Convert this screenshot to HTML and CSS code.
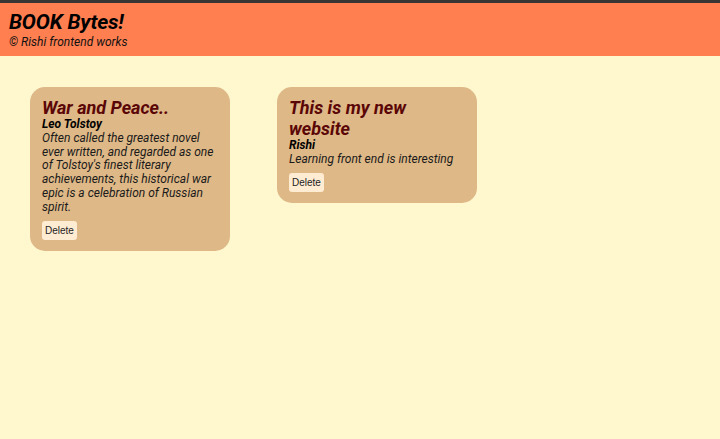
FILE: index.html
```html
<!DOCTYPE html>
<html>
<head>
<meta charset="utf-8">
<link rel="stylesheet" href="styles.css">
</head>
<body>
<header class="header">
  <h1 class="brand">BOOK Bytes!</h1>
  <p class="credit">© Rishi frontend works</p>
</header>
<main class="cards">
  <div class="card">
    <h2 class="card-title">War and Peace..</h2>
    <h3 class="card-author">Leo Tolstoy</h3>
    <p class="card-text">Often called the greatest novel ever written, and regarded as one of Tolstoy's finest literary achievements, this historical war epic is a celebration of Russian spirit.</p>
    <button class="delete-btn">Delete</button>
  </div>
  <div class="card">
    <h2 class="card-title">This is my new website</h2>
    <h3 class="card-author">Rishi</h3>
    <p class="card-text">Learning front end is interesting</p>
    <button class="delete-btn">Delete</button>
  </div>
</main>
</body>
</html>
```
FILE: styles.css
```css
html, body {
  margin: 0;
  padding: 0;
}
body {
  background: #fff8cf;
  border-top: 3px solid #383634;
  font-family: Roboto, "Noto Sans", sans-serif;
  font-style: italic;
  height: 436px;
}
.header {
  background: #ff7f50;
  padding: 6px 9px 7px;
  height: 40px;
}
.brand {
  margin: 0;
  font-size: 21px;
  line-height: 26px;
  letter-spacing: -0.15px;
  font-weight: 700;
  color: #000;
}
.credit {
  margin: 0;
  font-size: 12px;
  line-height: 14px;
  color: #111;
}
.cards {
  display: flex;
  align-items: flex-start;
  gap: 47px;
  padding: 31px 30px;
}
.card {
  width: 176px;
  background: #deb887;
  border-radius: 15px;
  padding: 10px 12px 11px;
}
.card-title {
  margin: 0;
  font-size: 18px;
  line-height: 21px;
  font-weight: 700;
  color: #5a0606;
}
.card-author {
  margin: 0;
  font-size: 12px;
  line-height: 13.8px;
  font-weight: 700;
}
.card-text {
  margin: 0 0 6.5px;
  font-size: 12px;
  line-height: 13.8px;
  color: #1a1a1a;
}
.delete-btn {
  display: block;
  font-family: "Liberation Sans", Arial, sans-serif;
  font-style: normal;
  font-size: 10px;
  line-height: 11px;
  background: #ffecd2;
  border: none;
  border-radius: 3px;
  padding: 4px 3px;
  color: #222;
}
```
